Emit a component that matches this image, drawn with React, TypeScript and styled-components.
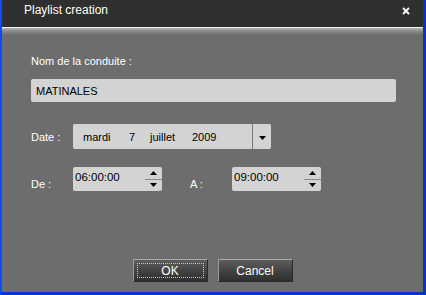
import React from "react";
import styled, { createGlobalStyle } from "styled-components";

const Global = createGlobalStyle`
  html, body { margin: 0; padding: 0; background: #6d6d6d; }
  body { width: 426px; height: 295px; overflow: hidden; }
  * { box-sizing: border-box; }
`;

const Window = styled.div`
  width: 426px;
  height: 295px;
  display: flex;
  flex-direction: column;
  border-left: 2px solid #0a50e8;
  border-right: 3px solid #0633c8;
  border-bottom: 3px solid #0636d0;
  font-family: "Liberation Sans", Arial, sans-serif;
  font-size: 11px;
  color: #fff;
`;

const TitleBar = styled.div`
  height: 28px;
  flex: none;
  background: #2f2f2f;
  border-bottom: 1px solid #f4f4f4;
  display: flex;
  align-items: center;
  justify-content: space-between;
  padding: 0 13px 8px 22px;
  font-size: 12px;
`;

const Close = styled.svg`
  width: 8px;
  height: 8px;
  margin-top: 2px;
`;

const Body = styled.div`
  flex: 1;
  display: flex;
  flex-direction: column;
  padding: 27px 27px 10px 29px;
  background: linear-gradient(#b4b4b4 0px, #8c8c8c 3px, #6d6d6d 7px, #6d6d6d 100%);
`;

const Label = styled.div`
  height: 13px;
  line-height: 13px;
`;

const TextInput = styled.div`
  margin-top: 11px;
  height: 23px;
  background: #d3d3d3;
  border-radius: 2px;
  color: #000;
  display: flex;
  align-items: center;
  padding-left: 5px;
  font-size: 11px;
`;

const Row = styled.div<{ $top: number; $h: number; $align: string }>`
  margin-top: ${(p) => p.$top}px;
  height: ${(p) => p.$h}px;
  display: flex;
  align-items: ${(p) => p.$align};
`;

const RowLabel = styled.div<{ $w: number; $pb?: number; $pl?: number }>`
  width: ${(p) => p.$w}px;
  flex: none;
  padding-bottom: ${(p) => p.$pb ?? 0}px;
  padding-left: ${(p) => p.$pl ?? 0}px;
`;

const Combo = styled.div`
  width: 198px;
  height: 100%;
  background: #d3d3d3;
  border-radius: 2px;
  display: flex;
  color: #000;
`;

const ComboValue = styled.div`
  flex: 1;
  display: flex;
  align-items: center;
  padding-left: 10px;
`;

const Part = styled.span<{ $w: number }>`
  display: inline-block;
  width: ${(p) => p.$w}px;
`;

const ComboButton = styled.div`
  width: 19px;
  border-left: 1px solid #7a7a7a;
  display: flex;
  align-items: center;
  justify-content: center;
  padding-top: 2px;
`;

const Spinner = styled.div`
  width: 89px;
  height: 100%;
  background: #d3d3d3;
  border-radius: 2px;
  display: flex;
  color: #000;
`;

const SpinValue = styled.div`
  flex: 1;
  padding: 4px 0 0 2px;
  font-size: 11.5px;
`;

const SpinButtons = styled.div`
  width: 17px;
  display: flex;
  flex-direction: column;
`;

const SpinHalf = styled.div<{ $line?: boolean }>`
  flex: 1;
  display: flex;
  align-items: center;
  justify-content: center;
  border-bottom: ${(p) => (p.$line ? "1px solid #8a8a8a" : "none")};
`;

const Spacer = styled.div`
  flex: 1;
`;

const ButtonRow = styled.div`
  display: flex;
  justify-content: center;
  gap: 10px;
  margin-right: 2px;
`;

const Button = styled.div<{ $focus?: boolean }>`
  position: relative;
  width: 75px;
  height: 23px;
  border: 1px solid #2a2a2a;
  border-top-color: #a8a8a8;
  border-left-color: #9a9a9a;
  background: linear-gradient(#5e5e5e, #3e3e3e 60%, #303030);
  color: #fff;
  font-size: 12px;
  display: flex;
  align-items: center;
  justify-content: center;
  &::after {
    content: "";
    display: ${(p) => (p.$focus ? "block" : "none")};
    position: absolute;
    inset: 3px;
    border: 1px dotted #c8c0d8;
  }
`;

const Tri = ({ up }: { up?: boolean }) => (
  <svg width="7" height="4" viewBox="0 0 7 4">
    <polygon points={up ? "0,4 3.5,0 7,4" : "0,0 7,0 3.5,4"} fill="#000" />
  </svg>
);

export default function App() {
  return (
    <>
      <Global />
      <Window>
        <TitleBar>
          <span>Playlist creation</span>
          <Close viewBox="0 0 8 8">
            <path d="M1 1 L7 7 M7 1 L1 7" stroke="#fff" strokeWidth="1.8" />
          </Close>
        </TitleBar>
        <Body>
          <Label>Nom de la conduite :</Label>
          <TextInput>MATINALES</TextInput>
          <Row $top={22} $h={25} $align="center">
            <RowLabel $w={42}>Date :</RowLabel>
            <Combo>
              <ComboValue>
                <Part $w={46}>mardi</Part>
                <Part $w={21}>7</Part>
                <Part $w={42}>juillet</Part>
                <Part $w={30}>2009</Part>
              </ComboValue>
              <ComboButton>
                <Tri />
              </ComboButton>
            </Combo>
          </Row>
          <Row $top={18} $h={24} $align="flex-end">
            <RowLabel $w={42} $pb={1}>De :</RowLabel>
            <Spinner>
              <SpinValue>06:00:00</SpinValue>
              <SpinButtons>
                <SpinHalf $line>
                  <Tri up />
                </SpinHalf>
                <SpinHalf>
                  <Tri />
                </SpinHalf>
              </SpinButtons>
            </Spinner>
            <RowLabel $w={70} $pb={1} $pl={28}>
              A :
            </RowLabel>
            <Spinner>
              <SpinValue>09:00:00</SpinValue>
              <SpinButtons>
                <SpinHalf $line>
                  <Tri up />
                </SpinHalf>
                <SpinHalf>
                  <Tri />
                </SpinHalf>
              </SpinButtons>
            </Spinner>
          </Row>
          <Spacer />
          <ButtonRow>
            <Button $focus>OK</Button>
            <Button>Cancel</Button>
          </ButtonRow>
        </Body>
      </Window>
    </>
  );
}
